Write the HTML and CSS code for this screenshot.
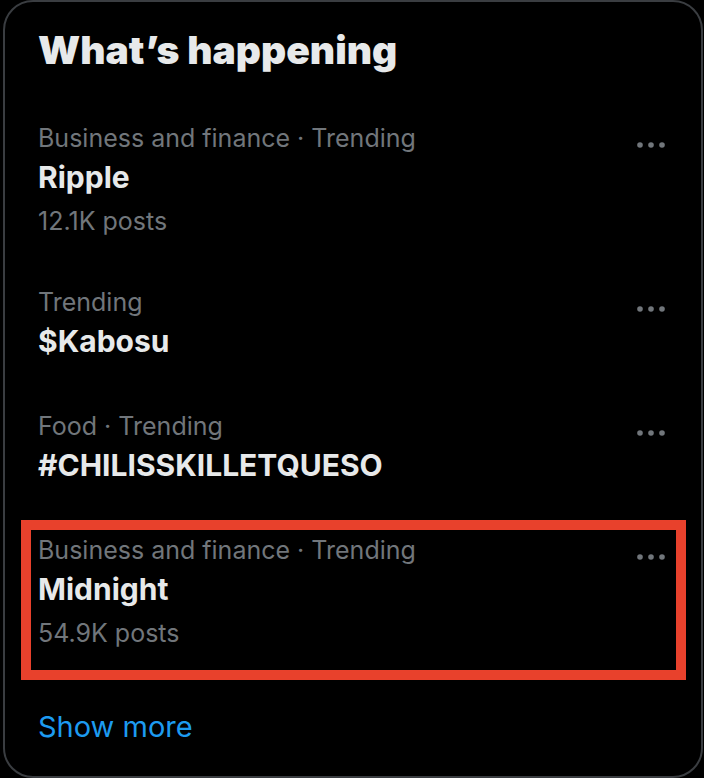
FILE: index.html
```html
<!DOCTYPE html>
<html lang="en">
<head>
    <meta charset="UTF-8">
    <meta name="viewport" content="width=device-width, initial-scale=1.0">
    <title>What's happening</title>
    <link rel="stylesheet" href="styles.css">
</head>
<body>

<div class="trends">
    <h2 class="trends-title">What’s happening</h2>

    <div class="trend">
        <div class="trend-text">
            <div class="trend-meta">Business and finance · Trending</div>
            <div class="trend-name">Ripple</div>
            <div class="trend-count">12.1K posts</div>
        </div>
        <svg class="trend-more" viewBox="0 0 32 32"><circle cx="5" cy="16" r="2.8"/><circle cx="16" cy="16" r="2.8"/><circle cx="27" cy="16" r="2.8"/></svg>
    </div>

    <div class="trend">
        <div class="trend-text">
            <div class="trend-meta">Trending</div>
            <div class="trend-name">$Kabosu</div>
        </div>
        <svg class="trend-more" viewBox="0 0 32 32"><circle cx="5" cy="16" r="2.8"/><circle cx="16" cy="16" r="2.8"/><circle cx="27" cy="16" r="2.8"/></svg>
    </div>

    <div class="trend">
        <div class="trend-text">
            <div class="trend-meta">Food · Trending</div>
            <div class="trend-name">#CHILISSKILLETQUESO</div>
        </div>
        <svg class="trend-more" viewBox="0 0 32 32"><circle cx="5" cy="16" r="2.8"/><circle cx="16" cy="16" r="2.8"/><circle cx="27" cy="16" r="2.8"/></svg>
    </div>

    <div class="trend highlighted">
        <div class="trend-text">
            <div class="trend-meta">Business and finance · Trending</div>
            <div class="trend-name">Midnight</div>
            <div class="trend-count">54.9K posts</div>
        </div>
        <svg class="trend-more" viewBox="0 0 32 32"><circle cx="5" cy="16" r="2.8"/><circle cx="16" cy="16" r="2.8"/><circle cx="27" cy="16" r="2.8"/></svg>
    </div>

    <a class="show-more" href="#">Show more</a>
</div>

</body>
</html>
```

FILE: styles.css
```css
html, body {
    margin: 0;
    background: #000;
}
body {
    font-family: Inter, "Liberation Sans", sans-serif;
}
.trends {
    box-sizing: border-box;
    width: 700px;
    height: 778px;
    margin-left: 3px;
    border: 2px solid #3a3d41;
    border-radius: 30px;
    display: flex;
    flex-direction: column;
}
.trends-title {
    margin: 0;
    padding: 25px 33px 24px;
    font-size: 39px;
    line-height: 46px;
    font-weight: 900;
    color: #e7e9ea;
}
.trend {
    position: relative;
    display: flex;
    justify-content: space-between;
    align-items: flex-start;
    padding: 25px 34px 25px 33px;
}
.trend-meta {
    font-size: 25px;
    line-height: 32px;
    color: #71767b;
}
.trend-name {
    margin-top: 4px;
    font-size: 30px;
    line-height: 38px;
    font-weight: 700;
    color: #e7e9ea;
}
.trend-count {
    margin-top: 10px;
    font-size: 25px;
    line-height: 30px;
    color: #71767b;
}
.trend-more {
    width: 32px;
    height: 32px;
    margin-top: 7px;
    fill: #71767b;
}
.highlighted::after {
    content: "";
    position: absolute;
    top: 11px;
    left: 16px;
    right: 15px;
    bottom: -7px;
    border: 10px solid #e8412c;
}
.show-more {
    padding: 38px 33px 0;
    font-size: 29px;
    line-height: 32px;
    color: #1d9bf0;
    text-decoration: none;
}
```
